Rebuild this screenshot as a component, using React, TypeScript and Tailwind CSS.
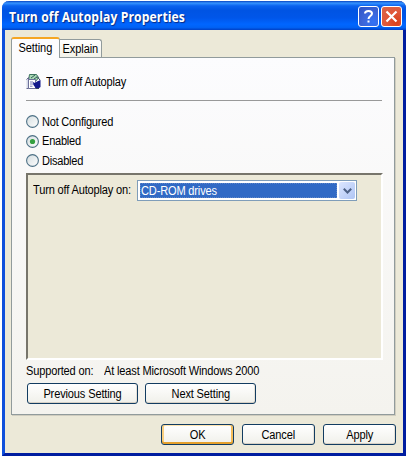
import React from "react";

function Label({ children, className = "origin-left tracking-[-0.17px]" }: { children: string; className?: string }) {
  return <span className={`inline-block scale-x-[0.92] ${className}`}>{children}</span>;
}

function Radio({ label, checked }: { label: string; checked?: boolean }) {
  return (
    <label className="flex h-[19.5px] items-center gap-[3px]">
      <svg width="13" height="13" viewBox="0 0 13 13" className="shrink-0">
        <defs>
          <linearGradient id="radioFace" x1="0" y1="0" x2="1" y2="1">
            <stop offset="0" stopColor="#d3dcdf" />
            <stop offset="1" stopColor="#ffffff" />
          </linearGradient>
        </defs>
        <circle cx="6.5" cy="6.5" r="5.900" fill="url(#radioFace)" stroke="#4d7085" strokeWidth="1.1" />
        {checked && <circle cx="6.5" cy="6.5" r="2.600" fill="#35a040" />}
      </svg>
      <Label className="origin-left tracking-[-0.25px]">{label}</Label>
    </label>
  );
}

function PushButton({ label, width, primary }: { label: string; width: string; primary?: boolean }) {
  const ring = primary
    ? "shadow-[inset_0_-2px_0_#e5a02c,inset_2px_0_0_#f9cf7f,inset_-2px_0_0_#f5bd58,inset_0_1px_0_#fde3ae]"
    : "shadow-[inset_0_-1px_0_#d6d0c5,inset_-1px_0_0_#e5e1d8]";
  return (
    <button
      className={`flex h-[21px] items-center justify-center rounded-[3px] border border-[#123c61] bg-linear-to-b from-white to-[#f0f0ea] ${ring} ${width}`}
    >
      <Label className="tracking-[-0.15px]">{label}</Label>
    </button>
  );
}

function PolicyIcon() {
  return (
    <svg width="15" height="17" viewBox="0 0 15 17" className="shrink-0">
      <path d="M3.500 1.500h7l2 3-2 3H2.500z" fill="#a9d8b4" stroke="#3f7560" />
      <path d="M5 5l4-3M8 6l3-2" stroke="#315f58" />
      <path d="M.500 6.500l2-2v11h-2" fill="#d5d9e8" stroke="#66698c" />
      <path d="M2.500 6.500h7v9h-7z" fill="#fff" stroke="#6e7199" />
      <path d="M4 9h3M4 11h4M4 13.200h2.500" stroke="#7478b5" />
      <path d="M7 9l2 1 2-1.500L14.500 7v7l-2 1.500H10L7.500 12z" fill="#12188c" />
      <path d="M11 3.500l3 3.500M9.500 15.500h3.500" stroke="#34445c" />
    </svg>
  );
}

export default function App() {
  return (
    <div className="h-[456px] w-[406px] overflow-hidden bg-white pt-px pl-[2px] font-['Liberation_Sans',sans-serif] text-[12px] leading-[14px] whitespace-nowrap text-black">
      <div className="flex h-[455px] w-[404px] flex-col rounded-t-[7px] border-r-[3px] border-b-[3px] border-l-[3px] border-r-[#001da0] border-b-[#001da0] border-l-[#0f50dc] bg-[#ece9d8]">
        <header className="-mx-[3px] flex h-[29px] shrink-0 items-center justify-between rounded-t-[7px] bg-[linear-gradient(180deg,#0843c0_0%,#3694ff_7%,#0b62ee_17%,#0054e3_32%,#0056e9_58%,#0066ff_80%,#0062f5_91%,#0040c5_100%)] pr-1 pl-[7px]">
          <h1 className="origin-left scale-x-[0.9] pt-[3px] font-['Open_Sans',sans-serif] text-[13.5px] font-bold tracking-[0.12px] text-white [text-shadow:1px_1px_1px_#0a2a80]">
            Turn off Autoplay Properties
          </h1>
          <div className="flex gap-[2px] pt-px">
            <button className="h-[21px] w-[21px] rounded-[3px] border border-white bg-[radial-gradient(circle_at_75%_80%,#3272f5,#3c65d8_50%,#2c50c4)]">
              <svg width="19" height="19" viewBox="0 0 19 19" fill="none" stroke="#fff" strokeWidth="2">
                <path d="M6 6.500C6 3 13 3 13 6.500c0 2.500-3.500 2.500-3.500 5.500M9.500 13.500v2" />
              </svg>
            </button>
            <button className="h-[21px] w-[21px] rounded-[3px] border border-white bg-[radial-gradient(circle_at_75%_80%,#d8401a,#e0583a_50%,#d9664a)]">
              <svg width="19" height="19" viewBox="0 0 19 19" fill="none" stroke="#fff" strokeWidth="2.200">
                <path d="M4.500 4.500l10 10M14.500 4.500l-10 10" />
              </svg>
            </button>
          </div>
        </header>

        <main className="flex h-[423px] flex-col pl-[6px]">
          <nav className="relative z-10 flex h-[28px] items-end">
            <div className="flex h-[21px] w-[49px] justify-center rounded-t-[3px] border-x border-t-2 border-x-[#919b9c] border-t-[#f5a623] bg-[#fcfcfe] pt-[2px]">
              <Label className="tracking-[-0.1px]">Setting</Label>
            </div>
            <div className="mb-px flex h-[18px] w-[42px] justify-center rounded-tr-[3px] border-t border-r border-[#919b9c] bg-linear-to-b from-white to-[#f3f2e9] pt-[2px]">
              <Label className="tracking-[-0.1px]">Explain</Label>
            </div>
          </nav>
          <section className="-mt-px flex h-[358px] w-[384px] flex-col border border-[#919b9c] bg-linear-to-b from-[#fcfcfe] to-[#f4f3ee] pl-[14px] shadow-[1px_1px_0_#d0cdbf]">
            <div className="flex h-[42px] items-center gap-[5px] pt-[5px]">
              <PolicyIcon />
              <Label>Turn off Autoplay</Label>
            </div>
            <hr className="w-[356px] border-t border-[#999]" />
            <div className="mt-[11px] h-[61px]">
              <Radio label="Not Configured" />
              <Radio label="Enabled" checked />
              <Radio label="Disabled" />
            </div>
            <div className="flex h-[187px] w-[357px] items-start border-2 border-t-[#77756b] border-r-white border-b-white border-l-[#77756b] bg-[#ece9d8] pt-[5px] pl-[5px]">
              <div className="w-[104px] pt-[3px]">
                <Label>Turn off Autoplay on:</Label>
              </div>
              <div className="flex h-[21px] w-[220px] items-center justify-between border border-[#7f9db9] bg-white pr-px pl-[2px]">
                <div className="h-[15px] w-[197px] bg-[#316ac5] pt-px pl-px text-white outline-1 -outline-offset-1 outline-dotted outline-[#5f86c8]">
                  <Label>CD-ROM drives</Label>
                </div>
                <span className="flex h-[17px] w-[16px] items-center justify-center rounded-[2px] bg-linear-to-br from-[#dce6ff] to-[#afc5f4]">
                  <svg width="9" height="6" viewBox="0 0 9 6" fill="none" stroke="#4d6185" strokeWidth="2">
                    <path d="M.8.800l3.700 3.700L8.200.800" />
                  </svg>
                </span>
              </div>
            </div>
            <div className="flex h-[23px] items-center pb-[2px]">
              <div className="w-[78px]">
                <Label>Supported on:</Label>
              </div>
              <Label>At least Microsoft Windows 2000</Label>
            </div>
            <div className="flex gap-[7px] pl-px">
              <PushButton label="Previous Setting" width="w-[111px]" />
              <PushButton label="Next Setting" width="w-[111px]" />
            </div>
          </section>
          <footer className="mt-[9px] flex gap-[8px] pl-[150px]">
            <PushButton label="OK" width="w-[73px]" primary />
            <PushButton label="Cancel" width="w-[73px]" />
            <PushButton label="Apply" width="w-[73px]" />
          </footer>
        </main>
      </div>
    </div>
  );
}
